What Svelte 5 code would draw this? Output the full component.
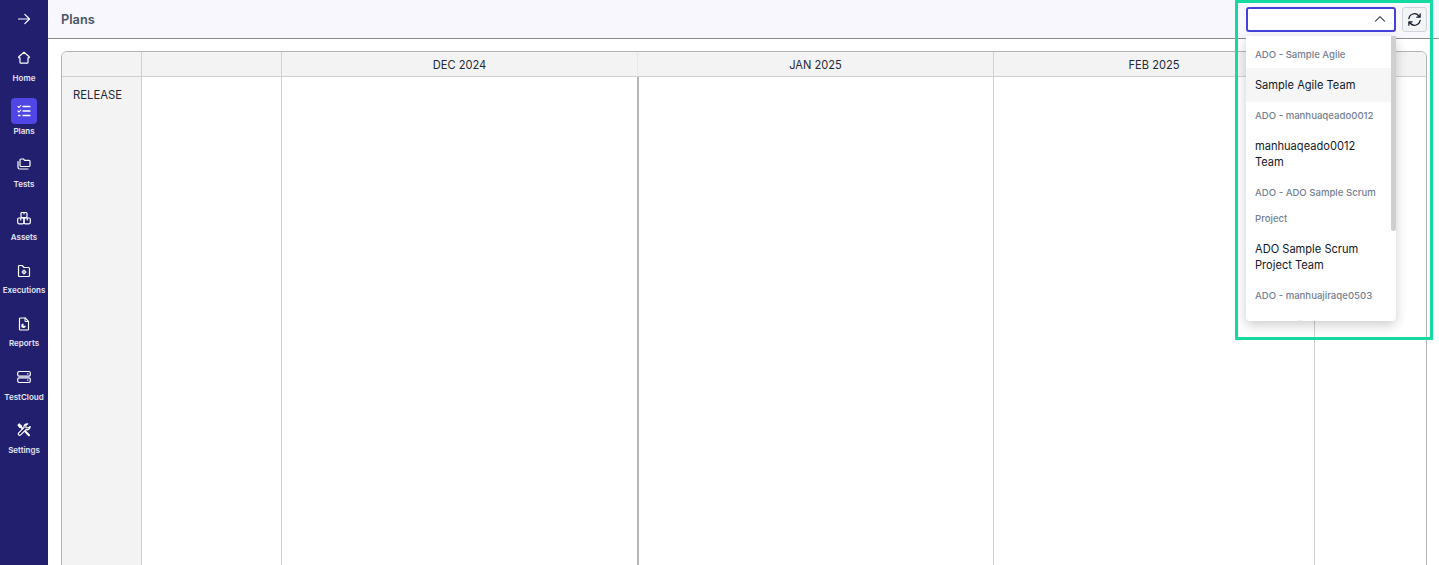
<script>
  const nav = [
    { label: 'Home', icon: 'home' },
    { label: 'Plans', icon: 'plans', active: true },
    { label: 'Tests', icon: 'tests' },
    { label: 'Assets', icon: 'assets' },
    { label: 'Executions', icon: 'exec' },
    { label: 'Reports', icon: 'reports' },
    { label: 'TestCloud', icon: 'cloud' },
    { label: 'Settings', icon: 'settings' }
  ];
  const months = ['', '', 'DEC 2024', 'JAN 2025', 'FEB 2025', ''];
  const groups = [
    { group: 'ADO - Sample Agile', team: 'Sample Agile Team', hover: true },
    { group: 'ADO - manhuaqeado0012', team: 'manhuaqeado0012 Team' },
    { group: 'ADO - ADO Sample Scrum Project', team: 'ADO Sample Scrum Project Team' },
    { group: 'ADO - manhuajiraqe0503', team: 'manhuajiraqe0503 Team' }
  ];
</script>

<div class="page">
  <aside class="side">
    <div class="toggle">
      <svg width="16" height="16" viewBox="0 0 16 16" fill="none" stroke="#fff" stroke-width="1.2" stroke-linecap="round" stroke-linejoin="round"><path d="M2.500 8h11M8.800 3.300 13.500 8l-4.700 4.700"/></svg>
    </div>
    <nav class="nav">
      {#each nav as n}
        <div class="item">
          <div class="ico" class:active={n.active}>
            <svg width="16" height="16" viewBox="0 0 16 16" fill="none" stroke="#fff" stroke-width="1.200" stroke-linecap="round" stroke-linejoin="round">
              {#if n.icon === 'home'}
                <path d="M8 2.200 2.800 6.800c-.4.400-.3 1 .3 1h.9v4.400c0 .6.400 1 1 1h6c.6 0 1-.4 1-1V7.800h.9c.6 0 .7-.6.300-1L8 2.200Z"/>
              {:else if n.icon === 'plans'}
                <path d="M7 3.500h7M7 8h7M7 12.500h7" stroke-width="1.300"/>
                <path d="M2 3.500l1 1 1.800-2M2 8l1 1 1.800-2" stroke-width="1.100"/>
                <path d="M2.500 12.500h1.500" stroke-width="1.300"/>
              {:else if n.icon === 'tests'}
                <path d="M4 9.500V4c0-.6.400-1 1-1h2.500l1.200 1.300H13c.6 0 1 .4 1 1v4.200c0 .6-.4 1-1 1H5c-.6 0-1-.4-1-1Z"/>
                <path d="M2 5.500v5.700c0 1 .7 1.800 1.800 1.800H12"/>
              {:else if n.icon === 'assets'}
                <rect x="5" y="2.500" width="6" height="5" rx="1"/>
                <rect x="1.700" y="8" width="6.300" height="5.800" rx="1.200"/>
                <rect x="8" y="8" width="6.300" height="5.800" rx="1.200"/>
                <path d="M8 2.500v1.500M4.800 8v2M11.200 8v2"/>
              {:else if n.icon === 'exec'}
                <path d="M2.500 12.500v-9c0-.6.400-1 1-1h2.700L8 4.500h4.500c.6 0 1 .4 1 1v7c0 .6-.4 1-1 1h-9c-.6 0-1-.4-1-1Z"/>
                <circle cx="8" cy="9" r="1.300" stroke-width="1.300"/>
                <path d="M8 6.800v.6M8 10.600v.6M5.900 9h.6M9.500 9h.6" stroke-width=".9"/>
              {:else if n.icon === 'reports'}
                <path d="M3.500 3c0-.6.400-1 1-1h4.700l3.300 3.300V13c0 .6-.4 1-1 1h-7c-.6 0-1-.4-1-1V3Z"/>
                <path d="M9 2v3.500h3.500" stroke-width="1"/>
                <path d="M7.500 7.500a2.300 2.300 0 1 0 2.300 2.300H7.500V7.500Z" fill="#fff" stroke="none"/>
              {:else if n.icon === 'cloud'}
                <rect x="1.700" y="2.500" width="12.600" height="4.700" rx="1.400"/>
                <rect x="1.700" y="8.800" width="12.600" height="4.700" rx="1.400"/>
                <path d="M11.500 4.800h.5M11.500 11.100h.5"/>
              {:else}
                <path d="M2 3.200 3.200 2l2.300 2v1.500H4L2 3.200Z" fill="#fff"/>
                <path d="M5 5l8 8.200" stroke-width="2"/>
                <path d="M14.200 4.600a3.200 3.200 0 0 1-4.200 3L4.700 12.900a1.400 1.400 0 0 1-2-2L8 5.600A3.200 3.200 0 0 1 11.700 1.800L9.800 3.700l.2 2 2 .3 2.200-1.400Z" fill="#221f6e"/>
              {/if}
            </svg>
          </div>
          <span class="lbl">{n.label}</span>
        </div>
      {/each}
    </nav>
  </aside>

  <main class="main">
    <header class="top">
      <h1>Plans</h1>
      <div class="controls">
        <div class="select">
          <svg width="12" height="12" viewBox="0 0 12 12" fill="none" stroke="#374151" stroke-width="1.100" stroke-linecap="round" stroke-linejoin="round"><path d="M1.500 8.200 6 3.700l4.500 4.500"/></svg>
        </div>
        <button class="refresh" aria-label="Refresh">
          <svg width="15" height="15" viewBox="0 0 16 16" fill="none" stroke="#111827" stroke-width="1.300" stroke-linecap="round" stroke-linejoin="round"><path d="M2 7a6 6 0 0 1 10.500-3L14 5.500M14 2v3.500h-3.500M14 9a6 6 0 0 1-10.500 3L2 10.500M2 14v-3.500h3.500"/></svg>
        </button>
      </div>
    </header>

    <div class="content">
      <div class="table">
        {#each months as m, i}
          <div class="head" class:split={i === 2}>{m}</div>
        {/each}
        <div class="cell rel">RELEASE</div>
        <div class="cell"></div>
        <div class="cell split"></div>
        <div class="cell"></div>
        <div class="cell"></div>
        <div class="cell"></div>
      </div>
    </div>
  </main>

  <div class="menu">
    <div class="list">
      {#each groups as g}
        <div class="group">{g.group}</div>
        <div class="team" class:hover={g.hover}>{g.team}</div>
      {/each}
    </div>
    <div class="thumb"></div>
  </div>
  <div class="mark"></div>
</div>

<style>
  :global(body) { margin: 0; background: #fff; overflow: hidden; }
  .page {
    position: relative;
    display: flex;
    width: 1439px;
    height: 565px;
    overflow: hidden;
    font-family: Inter, "Liberation Sans", sans-serif;
  }
  .side {
    width: 48px;
    flex: none;
    background: #221f6e;
    display: flex;
    flex-direction: column;
    align-items: center;
  }
  .toggle { height: 38px; display: flex; align-items: center; justify-content: center; }
  .nav { display: flex; flex-direction: column; padding-top: 7px; gap: 1.200px; width: 100%; }
  .item { height: 52px; display: flex; flex-direction: column; align-items: center; }
  .ico {
    width: 26px; height: 26px; border-radius: 4px;
    display: flex; align-items: center; justify-content: center;
  }
  .ico.active { background: #4f46e5; }
  .lbl {
    margin-top: .5px;
    font-size: 8px; line-height: 13px; font-weight: 600; color: #e5e7f5;
    white-space: nowrap;
  }
  .main { flex: 1; min-width: 0; display: flex; flex-direction: column; }
  .top {
    height: 38px;
    flex: none;
    background: #f7f7fd;
    border-top: 1px solid #7b78b0;
    border-bottom: 1px solid #8c8c8c;
    margin-top: -1px;
    display: flex;
    align-items: center;
    justify-content: space-between;
    padding: 0 12px 0 13px;
  }
  h1 { margin: 0; font-size: 12.800px; font-weight: 600; color: #4b5563; }
  .controls { display: flex; align-items: center; gap: 6px; }
  .select {
    width: 150px; height: 25px; box-sizing: border-box;
    border: 2px solid #4540da; border-radius: 3px; background: #fff;
    display: flex; align-items: center; justify-content: flex-end;
    padding-right: 8px;
  }
  .refresh {
    width: 25px; height: 25px; padding: 0; box-sizing: border-box;
    border: 1px solid #d1d5db; border-radius: 3px; background: #f3f4f6;
    display: flex; align-items: center; justify-content: center;
  }
  .content { padding: 12px 12px 0 13px; flex: 1; min-height: 0; }
  .table {
    display: grid;
    grid-template-columns: 80px 140px 356px 356px 321px 1fr;
    grid-template-rows: 25px 1fr;
    height: 600px;
    border: 1px solid #b3b3b3;
    border-radius: 6px 6px 0 0;
    overflow: hidden;
  }
  .head {
    background: #f3f3f3;
    border-right: 1px solid #d0d0d0;
    border-bottom: 1px solid #cfcfcf;
    font-size: 11.100px; line-height: 26px; text-align: center; color: #1f2937;
  }
  .head.split { border-right-color: #e8e8e8; }
  .head:nth-child(6) { border-right: 0; }
  .cell { border-right: 1px solid #cfcfcf; background: #fff; }
  .cell.split { border-right-color: #b5b5b5; }
  .cell.split + .cell { border-left: 1px solid #b5b5b5; }
  .cell:last-child { border-right: 0; }
  .rel {
    background: #f3f3f3;
    font-size: 11.300px; color: #1f2937;
    padding: 10.500px 0 0 11px;
    line-height: 14px;
  }
  .menu {
    position: absolute;
    left: 1246px; top: 36px;
    width: 150px; height: 285px;
    background: #fff;
    border-radius: 0 0 4px 4px;
    box-shadow: 0 4px 12px rgba(0, 0, 0, .2);
    overflow: hidden;
  }
  .list { width: 145px; padding-top: 5px; }
  .group {
    padding: 1px 9px .4px;
    font-size: 9.600px; line-height: 25.600px; font-weight: 500; color: #737f93;
  }
  .team {
    padding: 9px 9px;
    font-size: 11.100px; line-height: 16px; color: #111827;
  }
  .team.hover { background: #f6f6f6; }
  .thumb {
    position: absolute; right: 0; top: 0;
    width: 5px; height: 195px;
    background: #cfcfcf; border-radius: 0 0 3px 3px;
  }
  .mark {
    position: absolute;
    left: 1235px; top: 0;
    width: 198px; height: 340px;
    box-sizing: border-box;
    border: 3px solid #14d9a0;
    pointer-events: none;
  }
</style>
